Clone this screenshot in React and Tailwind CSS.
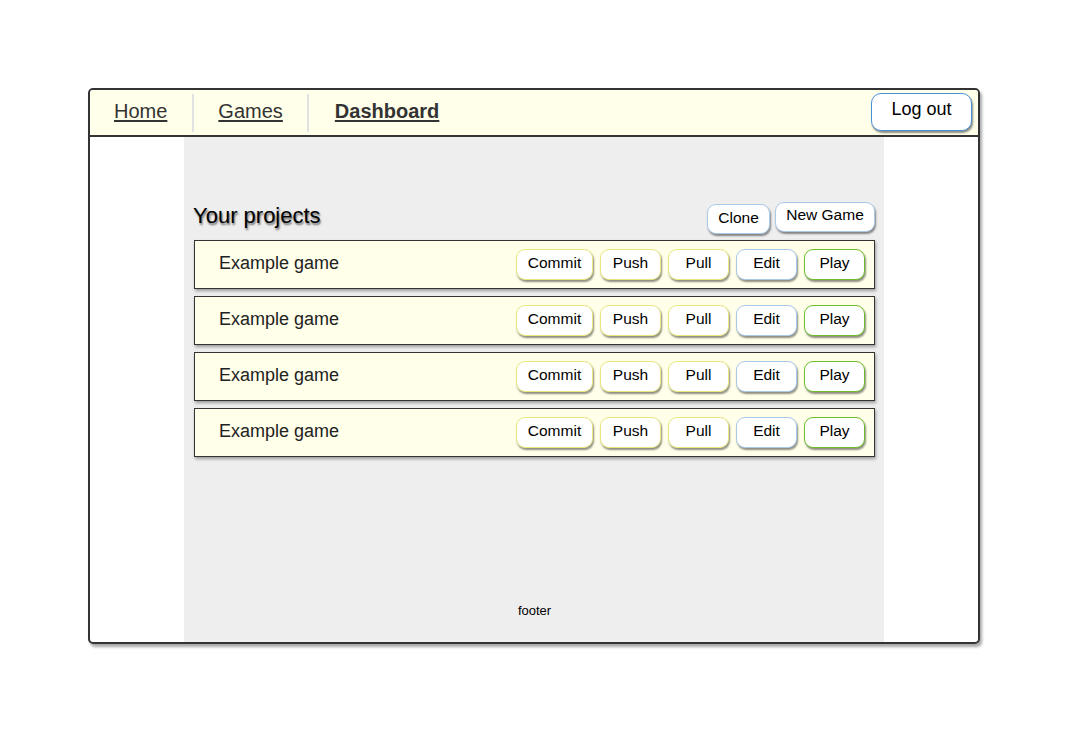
const rows = [1, 2, 3, 4];

function Btn({ children, tone, className = "" }) {
  const tones = {
    yellow: "border-[#e8e67c]",
    blue: "border-[#a9c9ea]",
    green: "border-[#6cbf2a]",
  };
  return (
    <button
      className={`h-[31px] bg-white border rounded-[9px] text-[15.5px] text-black pb-[4px] shadow-[1px_2px_2px_rgba(0,0,0,0.45)] ${tones[tone]} ${className}`}
    >
      {children}
    </button>
  );
}

function ProjectRow() {
  return (
    <div className="h-[49px] flex items-center justify-between bg-[#ffffea] border border-[#333] shadow-[1px_2px_3px_rgba(0,0,0,0.35)] pl-6 pr-[9px]">
      <span className="text-[18px] text-[#222] pb-[3px]">Example game</span>
      <div className="flex gap-[7px] items-center">
        <Btn tone="yellow" className="w-[77px]">Commit</Btn>
        <Btn tone="yellow" className="w-[61px]">Push</Btn>
        <Btn tone="yellow" className="w-[61px]">Pull</Btn>
        <Btn tone="blue" className="w-[61px]">Edit</Btn>
        <Btn tone="green" className="w-[61px]">Play</Btn>
      </div>
    </div>
  );
}

export default function App() {
  return (
    <div className="w-[1072px] h-[738px] bg-white pt-[88px] pl-[88px] font-['Liberation_Sans',Arial,sans-serif]">
      <div className="w-[892px] h-[556px] border-2 border-[#333] rounded-[5px] shadow-[2px_3px_3px_rgba(0,0,0,0.35)] flex flex-col overflow-hidden">
        <nav className="h-[47px] bg-[#ffffea] border-b-2 border-[#333] flex items-center pr-[6px] shrink-0">
          <a className="pl-[24px] pr-[25px] pb-[3px] text-[20px] text-[#333] underline underline-offset-2">Home</a>
          <div className="w-[2px] h-[38px] bg-[#e2e2e2]" />
          <a className="pl-[24px] pr-[24px] pb-[3px] text-[20px] text-[#333] underline underline-offset-2">Games</a>
          <div className="w-[2px] h-[38px] bg-[#e2e2e2]" />
          <a className="pl-[26px] pb-[3px] text-[20px] font-bold text-[#333] underline underline-offset-2">Dashboard</a>
          <div className="flex-1" />
          <button className="w-[101px] h-[38px] -mt-[1px] bg-white border-[1.5px] border-[#4a90d9] rounded-[10px] text-[18px] text-black shadow-[1px_2px_2px_rgba(0,0,0,0.45)] pb-[5px]">
            Log out
          </button>
        </nav>
        <div className="flex-1 flex justify-center">
          <main className="w-[700px] bg-[#eeeeee] flex flex-col pl-[10px] pr-[9px]">
            <div className="mt-[66px] h-[30px] flex items-center justify-between">
              <h2 className="text-[22px] text-black -ml-[1px] pb-[6px] [text-shadow:1px_2px_2px_rgba(0,0,0,0.55)]">Your projects</h2>
              <div className="flex gap-[5px] items-start">
                <button className="w-[63px] h-[30px] mt-[1px] bg-white border border-[#a9c9ea] rounded-[9px] text-[15.5px] text-black shadow-[1px_2px_2px_rgba(0,0,0,0.45)] pb-[2px]">
                  Clone
                </button>
                <button className="w-[100px] h-[30px] -mt-[1px] bg-white border border-[#a9c9ea] rounded-[9px] text-[15.5px] text-black shadow-[1px_2px_2px_rgba(0,0,0,0.45)] pb-[4px]">
                  New Game
                </button>
              </div>
            </div>
            <div className="mt-[7px] flex flex-col gap-[7px]">
              {rows.map((r) => (
                <ProjectRow key={r} />
              ))}
            </div>
            <footer className="mt-auto mb-[22px] text-center text-[13px] text-black">footer</footer>
          </main>
        </div>
      </div>
    </div>
  );
}
